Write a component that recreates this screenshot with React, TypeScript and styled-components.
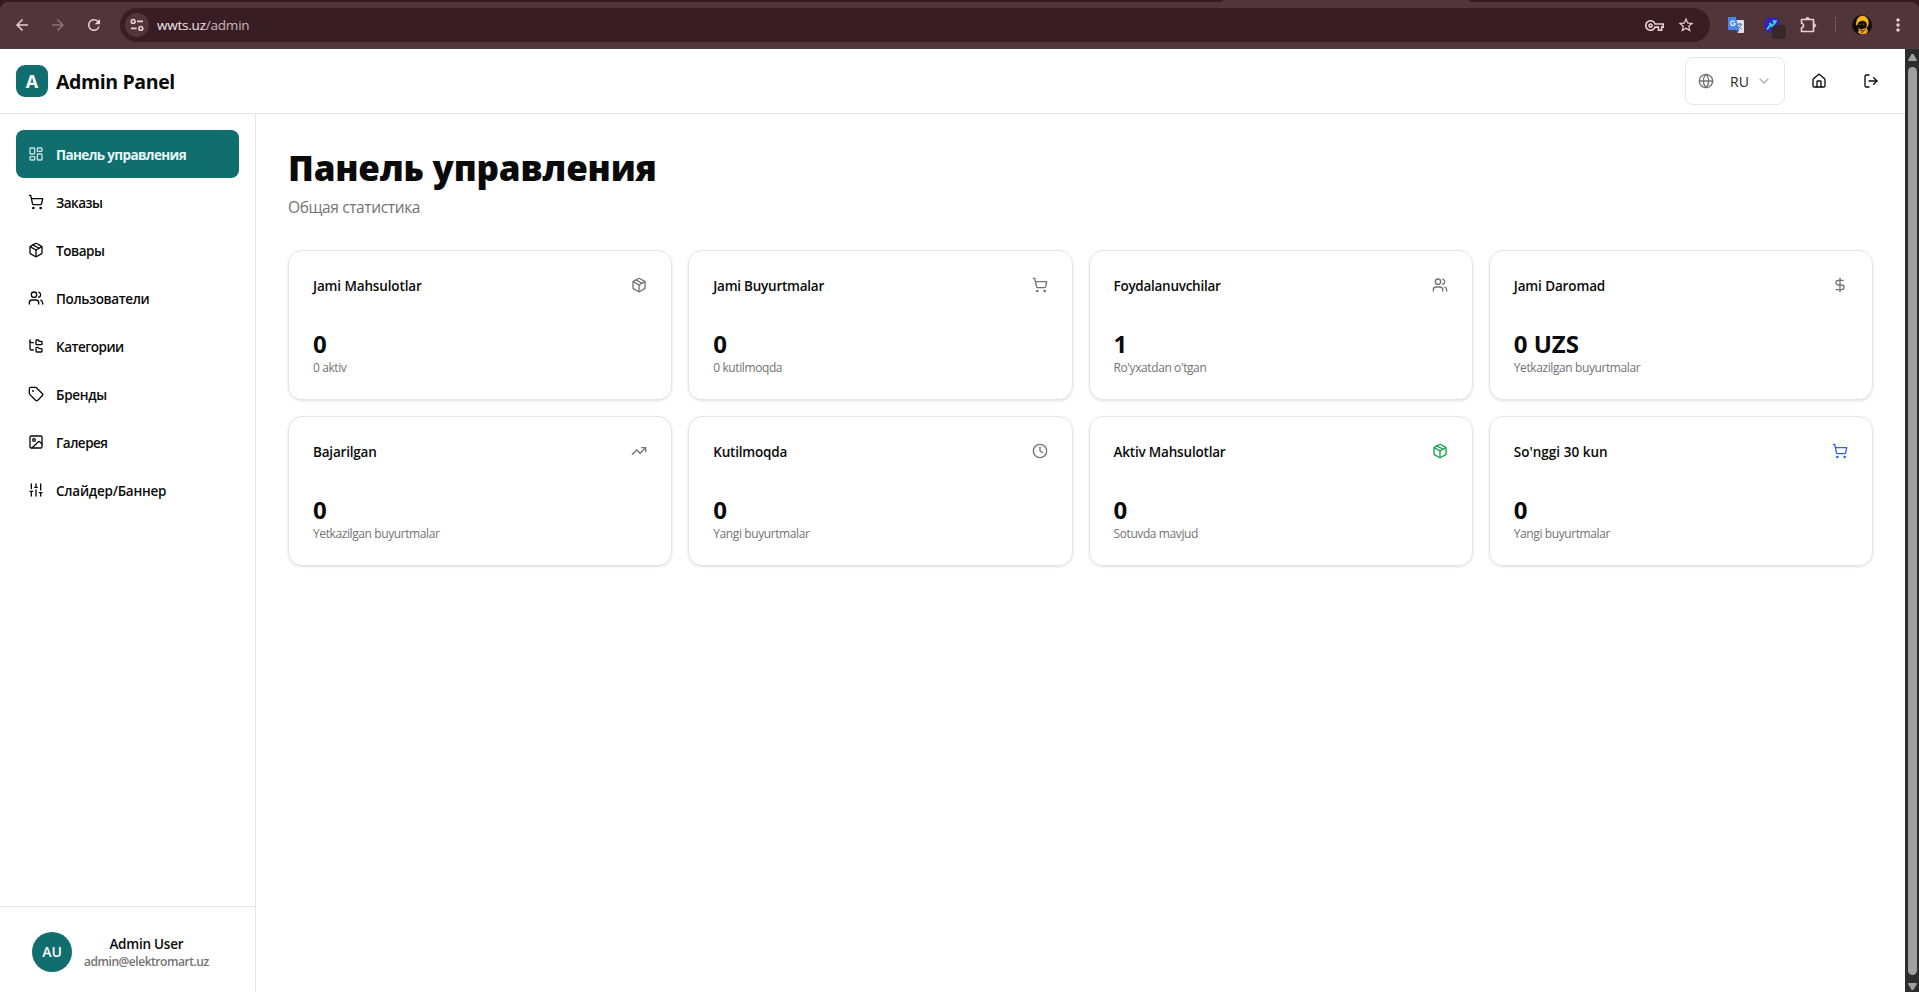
import React from "react";
import styled, { createGlobalStyle } from "styled-components";
import {
  ChevronDown, Clock, DollarSign, FolderTree, Globe, House, Image as ImageIcon, LayoutDashboard, LogOut,
  Package, ShoppingCart, SlidersVertical, Tag, TrendingUp, Users,
} from "lucide-react";
import type { LucideIcon } from "lucide-react";
import { MdArrowBack, MdArrowForward, MdMoreVert, MdOutlineVpnKey, MdRefresh, MdStarOutline } from "react-icons/md";

const Global = createGlobalStyle`
  *, *::before, *::after { box-sizing: border-box; }
  html, body, #root { height: 100%; margin: 0; }
  body {
    font-family: "Open Sans", "Noto Sans", sans-serif;
    color: #0a0a0a;
    background: #fff;
    overflow: hidden;
  }
  button { font: inherit; color: inherit; background: none; border: 0; padding: 0; }
  h1, p { margin: 0; }
  svg { display: block; flex: none; }
`;

/* Single-line label with its own tracking, in px */
const Label = styled.span<{ $track: number }>`
  letter-spacing: ${(p) => p.$track}px;
  white-space: nowrap;
  padding-top: 1px;
`;

const Window = styled.div`
  display: flex;
  flex-direction: column;
  height: 992px;
  width: 1919px;
`;

const TabStrip = styled.div`
  height: 2px;
  background: #35191f;
  padding-left: 1222px;
`;
const ActiveTabEdge = styled.div`
  width: 248px;
  height: 2px;
  background: #52343b;
  border-radius: 2px 2px 0 0;
`;
const ChromeFrame = styled.div`
  flex: none;
  background: #35191f;
`;
const Toolbar = styled.div`
  height: 47px;
  background: #52343b;
  border-bottom: 1px solid #4d3d41;
  border-radius: 8px 8px 0 0;
  display: flex;
  align-items: center;
  padding: 0 3px 0 4px;
  color: #eccdd4;
`;
const ToolButton = styled.button<{ $dim?: boolean; $w?: number }>`
  position: relative;
  width: ${(p) => p.$w ?? 36}px;
  height: 34px;
  display: grid;
  place-items: center;
  opacity: ${(p) => (p.$dim ? 0.4 : 1)};
`;
const AddressBar = styled.div`
  height: 34px;
  width: 1590px;
  border-radius: 17px;
  background: #381e24;
  display: flex;
  align-items: center;
  padding: 0 8px 0 5px;
  margin: 0 8px;
`;
const SiteInfo = styled.div`
  width: 24px;
  height: 24px;
  border-radius: 50%;
  background: #52343b;
  display: grid;
  place-items: center;
`;
const Url = styled.span`
  margin-left: 8px;
  font-size: 13.5px;
  letter-spacing: -0.22px;
  line-height: 20px;
  color: #cbb3b8;
  flex: 1;
  b { font-weight: 400; color: #f6e3e7; }
`;
const Badge = styled.i`
  position: absolute;
  left: 18px;
  top: 17px;
  width: 14px;
  height: 14px;
  border-radius: 4px;
  background: #35282b;
`;
const Separator = styled.i`
  width: 1px;
  height: 16px;
  background: #79565e;
  margin: 0 8px 0 9px;
`;

const Viewport = styled.div`
  flex: 1;
  display: flex;
  min-height: 0;
`;
const Page = styled.div`
  flex: 1;
  display: flex;
  flex-direction: column;
  min-width: 0;
`;
const ScrollTrack = styled.div`
  width: 14px;
  background: #2c2c2c;
  display: flex;
  flex-direction: column;
  padding: 5px 2px 2px 3px;
`;
const ScrollThumb = styled.div`
  width: 9px;
  flex: 1;
  margin: 6px 0 8px;
  border-radius: 5px;
  background: #9f9f9f;
`;

const Header = styled.header`
  height: 65px;
  flex: none;
  border-bottom: 1px solid #e5e5e5;
  display: flex;
  align-items: center;
  justify-content: space-between;
  padding: 0 16px;
`;
const Brand = styled.div`
  display: flex;
  align-items: center;
  gap: 8px;
`;
const BrandName = styled.span`
  font-size: 19.5px;
  letter-spacing: -0.38px;
  line-height: 28px;
  font-weight: 700;
  padding-top: 1px;
`;
const Logo = styled.div`
  width: 32px;
  height: 32px;
  border-radius: 9px;
  background: #116e6f;
  color: #fff;
  font-size: 18px;
  font-weight: 700;
  display: grid;
  place-items: center;
`;
const Actions = styled.div`
  display: flex;
  align-items: center;
  gap: 16px;
`;
const LangSelect = styled.button`
  width: 100px;
  height: 48px;
  border: 1px solid #e5e5e5;
  border-radius: 8px;
  display: flex;
  align-items: center;
  padding: 0 12px;
  font-size: 14px;
  color: #262626;
  svg:first-child { color: #737373; margin-right: 16px; }
  svg:last-child { color: #b0b0b0; margin-left: auto; }
`;
const IconButton = styled.button`
  width: 36px;
  height: 36px;
  display: grid;
  place-items: center;
`;

const Body = styled.div`
  flex: 1;
  display: flex;
  min-height: 0;
`;
const Sidebar = styled.aside`
  width: 256px;
  border-right: 1px solid #e5e5e5;
  display: flex;
  flex-direction: column;
`;
const Nav = styled.nav`
  flex: 1;
  padding: 16px;
`;
const NavItem = styled.a<{ $active?: boolean }>`
  height: 48px;
  display: flex;
  align-items: center;
  gap: 12px;
  padding: 0 12px;
  border-radius: 8px;
  font-size: 13.5px;
  font-weight: ${(p) => (p.$active ? 700 : 600)};
  background: ${(p) => (p.$active ? "#116e6f" : "transparent")};
  color: ${(p) => (p.$active ? "#e6f7f7" : "#0a0a0a")};
  svg { opacity: ${(p) => (p.$active ? 0.85 : 1)}; }
`;
const UserBox = styled.div`
  height: 86px;
  border-top: 1px solid #e5e5e5;
  display: flex;
  align-items: center;
  padding: 4px 32px 0;
  gap: 12px;
`;
const Avatar = styled.div`
  width: 40px;
  height: 40px;
  border-radius: 50%;
  background: #116e6f;
  color: #fff;
  font-size: 14px;
  font-weight: 600;
  display: grid;
  place-items: center;
`;
const UserText = styled.div`
  text-align: center;
  font-weight: 600;
  font-size: 13.5px;
  letter-spacing: -0.24px;
  line-height: 20px;
`;
const UserMail = styled.div`
  font-size: 12px;
  letter-spacing: -0.46px;
  line-height: 16px;
  color: #737373;
`;

const Main = styled.main`
  flex: 1;
  padding: 31px 32px 32px;
`;
const Title = styled.h1`
  font-size: 35px;
  letter-spacing: -0.2px;
  line-height: 45px;
  font-weight: 800;
`;
const Subtitle = styled.p`
  font-size: 15.5px;
  letter-spacing: -0.38px;
  line-height: 24px;
  margin-top: 5px;
  color: #737373;
`;
const Grid = styled.div`
  margin-top: 31px;
  display: grid;
  grid-template-columns: repeat(4, 1fr);
  gap: 16px;
`;
const Card = styled.section`
  height: 150px;
  border: 1px solid #e5e5e5;
  border-radius: 14px;
  padding: 24px;
  box-shadow: 0 1px 3px rgba(0, 0, 0, 0.1), 0 1px 2px -1px rgba(0, 0, 0, 0.1);
`;
const CardHead = styled.div<{ $color: string }>`
  display: flex;
  align-items: center;
  justify-content: space-between;
  height: 20px;
  font-size: 13.5px;
  font-weight: 600;
  svg { color: ${(p) => p.$color}; }
`;
const Value = styled.div`
  margin-top: 33px;
  font-size: 24px;
  line-height: 32px;
  font-weight: 700;
`;
const Note = styled.p`
  font-size: 12px;
  letter-spacing: -0.4px;
  line-height: 16px;
  color: #737373;
`;

const TuneIcon = () => (
  <svg width="14" height="14" viewBox="0 0 14 14" fill="none" stroke="currentColor" strokeWidth="1.6">
    <circle cx="3.2" cy="3.4" r="1.9" />
    <path d="M7 3.4h6M1 10.4h5.6" />
    <circle cx="10.8" cy="10.4" r="1.9" />
  </svg>
);
const TranslateIcon = () => (
  <svg width="16" height="16" viewBox="0 0 16 16">
    <path d="M6 3h9a1 1 0 0 1 1 1v11a1 1 0 0 1-1 1H9.5z" fill="#dfe3ea" />
    <path d="M8.6 7.2h5.8M11.5 6v1.2M13.2 7.4c-.5 2.2-1.9 3.7-3.6 4.6M10 8.6c.7 1.5 2 2.8 3.6 3.6" stroke="#5f7185" strokeWidth="1" fill="none" />
    <path d="M1 0h6.8l3.4 13H1a1 1 0 0 1-1-1V1a1 1 0 0 1 1-1z" fill="#4a86ee" />
    <path d="M8 13h3.2l-1.7 3z" fill="#2a56c6" />
    <path d="M6.7 4.8A2.3 2.3 0 1 0 7.2 6.7H5" stroke="#fff" strokeWidth="1.1" fill="none" />
  </svg>
);
const BoltIcon = () => (
  <svg width="16" height="16" viewBox="0 0 16 16">
    <circle cx="8" cy="8" r="8" fill="#3a21b4" />
    <path d="M3 12.5 6.5 8l2 1 4-5.500M8.500 4.200h4M5.500 6l4 4.500" stroke="#35d5f5" strokeWidth="1.9" fill="none" />
  </svg>
);
const PuzzleIcon = () => (
  <svg width="18" height="18" viewBox="0 0 18 18" fill="none" stroke="currentColor" strokeWidth="1.6" strokeLinejoin="round">
    <path d="M2.500 3.500H14.500V15.500H2.500V11.700C5.200 11.700 5.200 7.300 2.500 7.300Z" />
    <path d="M6.500 3.200a2 2 0 0 1 4 0zM14.800 7.500a2 2 0 0 1 0 4z" fill="currentColor" strokeWidth=".4" />
  </svg>
);
const ProfileIcon = () => (
  <svg width="20" height="20" viewBox="0 0 20 20">
    <circle cx="10" cy="10" r="10" fill="#120d0a" />
    <path d="M10.5.8c3.6.2 6 2.9 6.2 6.5.1 2.7-.9 4.7-2.6 6.2l.8-4.3C14 6.5 12 5.6 9.5 5.9 7 6.2 5.8 7.6 5.7 9.6L4.3 10.8C3.4 6 5.8.8 10.5.8z" fill="#f4b21f" />
    <path d="M6.6 12.7c1 1.3 2.5 1.8 4 1.3l3.6-1.2 1.8 3-1.7 3-4.6.7-3.8-1.7.8-1.9z" fill="#eda41c" />
    <path d="M8 14.8l2.6 1.3 2.9-1.6M9.4 17.8l2-1.4" stroke="#2a1906" strokeWidth=".9" fill="none" />
    <circle cx="7.9" cy="9.6" r=".7" fill="#a8700f" />
    <circle cx="11.7" cy="9.3" r=".7" fill="#a8700f" />
  </svg>
);
const ScrollArrow = ({ down }: { down?: boolean }) => (
  <svg width="9" height="7" viewBox="0 0 9 7">
    <path d={down ? "M.3 0h8.400v1.300L5.400 7H3.600L.3 1.300z" : "M.3 7h8.400V5.700L5.400 0H3.600L.3 5.700z"} fill="#9f9f9f" />
  </svg>
);

const nav: { label: string; icon: LucideIcon; track: number }[] = [
  { label: "Панель управления", icon: LayoutDashboard, track: -0.62 },
  { label: "Заказы", icon: ShoppingCart, track: -0.52 },
  { label: "Товары", icon: Package, track: -0.43 },
  { label: "Пользователи", icon: Users, track: -0.38 },
  { label: "Категории", icon: FolderTree, track: -0.5 },
  { label: "Бренды", icon: Tag, track: -0.3 },
  { label: "Галерея", icon: ImageIcon, track: -0.5 },
  { label: "Слайдер/Баннер", icon: SlidersVertical, track: -0.24 },
];

const grey = "#737373";
const cards: { title: string; track: number; value: string; note: string; icon: LucideIcon; color: string }[] = [
  { title: "Jami Mahsulotlar", track: -0.13, value: "0", note: "0 aktiv", icon: Package, color: grey },
  { title: "Jami Buyurtmalar", track: -0.24, value: "0", note: "0 kutilmoqda", icon: ShoppingCart, color: grey },
  { title: "Foydalanuvchilar", track: -0.27, value: "1", note: "Ro'yxatdan o'tgan", icon: Users, color: grey },
  { title: "Jami Daromad", track: -0.13, value: "0 UZS", note: "Yetkazilgan buyurtmalar", icon: DollarSign, color: grey },
  { title: "Bajarilgan", track: -0.2, value: "0", note: "Yetkazilgan buyurtmalar", icon: TrendingUp, color: grey },
  { title: "Kutilmoqda", track: -0.2, value: "0", note: "Yangi buyurtmalar", icon: Clock, color: grey },
  { title: "Aktiv Mahsulotlar", track: -0.19, value: "0", note: "Sotuvda mavjud", icon: Package, color: "#16a34a" },
  { title: "So'nggi 30 kun", track: 0.02, value: "0", note: "Yangi buyurtmalar", icon: ShoppingCart, color: "#2563eb" },
];

export default function App() {
  return (
    <Window>
      <Global />
      <ChromeFrame>
        <TabStrip><ActiveTabEdge /></TabStrip>
        <Toolbar>
          <ToolButton><MdArrowBack size={18} /></ToolButton>
          <ToolButton $dim><MdArrowForward size={18} /></ToolButton>
          <ToolButton><MdRefresh size={18} /></ToolButton>
          <AddressBar>
            <SiteInfo><TuneIcon /></SiteInfo>
            <Url><b>wwts.uz</b>/admin</Url>
            <ToolButton $w={32}><MdOutlineVpnKey size={19} /></ToolButton>
            <ToolButton $w={32}><MdStarOutline size={18} /></ToolButton>
          </AddressBar>
          <ToolButton><TranslateIcon /></ToolButton>
          <ToolButton><BoltIcon /><Badge /></ToolButton>
          <ToolButton><PuzzleIcon /></ToolButton>
          <Separator />
          <ToolButton><ProfileIcon /></ToolButton>
          <ToolButton><MdMoreVert size={20} /></ToolButton>
        </Toolbar>
      </ChromeFrame>
      <Viewport>
        <Page>
          <Header>
            <Brand><Logo>A</Logo><BrandName>Admin Panel</BrandName></Brand>
            <Actions>
              <LangSelect><Globe size={16} />RU<ChevronDown size={16} /></LangSelect>
              <IconButton><House size={16} /></IconButton>
              <IconButton><LogOut size={16} /></IconButton>
            </Actions>
          </Header>
          <Body>
            <Sidebar>
              <Nav>
                {nav.map(({ label, icon: Icon, track }, i) => (
                  <NavItem key={label} $active={i === 0}>
                    <Icon size={16} />
                    <Label $track={track}>{label}</Label>
                  </NavItem>
                ))}
              </Nav>
              <UserBox>
                <Avatar>AU</Avatar>
                <UserText>Admin User<UserMail>admin@elektromart.uz</UserMail></UserText>
              </UserBox>
            </Sidebar>
            <Main>
              <Title>Панель управления</Title>
              <Subtitle>Общая статистика</Subtitle>
              <Grid>
                {cards.map(({ title, track, value, note, icon: Icon, color }) => (
                  <Card key={title}>
                    <CardHead $color={color}>
                      <Label $track={track}>{title}</Label>
                      <Icon size={16} />
                    </CardHead>
                    <Value>{value}</Value>
                    <Note>{note}</Note>
                  </Card>
                ))}
              </Grid>
            </Main>
          </Body>
        </Page>
        <ScrollTrack><ScrollArrow /><ScrollThumb /><ScrollArrow down /></ScrollTrack>
      </Viewport>
    </Window>
  );
}
